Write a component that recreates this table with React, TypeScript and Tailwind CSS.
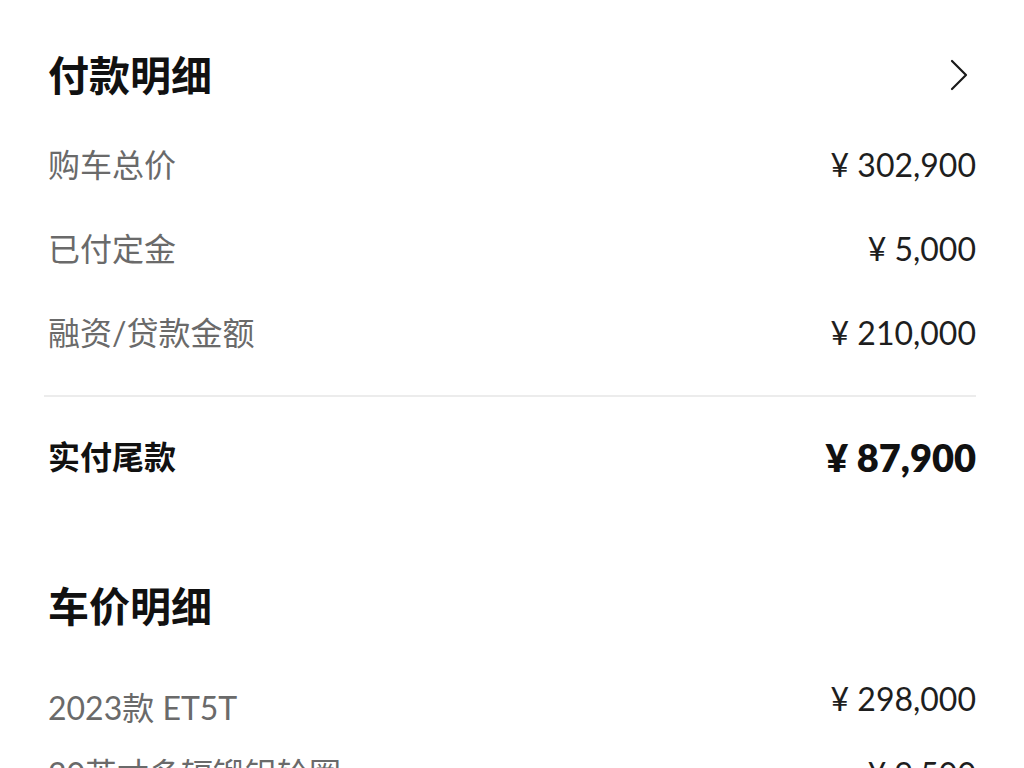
const font = "font-['Lato','Noto_Sans_CJK_SC',sans-serif]"

function Row({ label, value, className = 'h-[84px]' }: { label: string; value: string; className?: string }) {
  return (
    <div className={`flex items-center justify-between ${className}`}>
      <span className="text-[32px] leading-none text-[#6a6a6a]">{label}</span>
      <span className="text-[32px] leading-none text-[#1e1e1e]">{value}</span>
    </div>
  )
}

export default function App() {
  return (
    <div className={`h-[768px] w-[1024px] overflow-hidden bg-white px-12 pt-[47px] ${font}`}>
      <div className="flex h-[56px] items-center justify-between">
        <h2 className="text-[41px] font-bold leading-none text-[#111]">付款明细</h2>
        <svg width="22" height="32" viewBox="0 0 22 32" fill="none" className="mr-[6px]">
          <path d="M4 2 L18 16 L4 30" stroke="#1a1a1a" strokeWidth="2.2" strokeLinecap="round" strokeLinejoin="round" />
        </svg>
      </div>

      <div className="mt-[20px]">
        <Row label="购车总价" value="¥ 302,900" />
        <Row label="已付定金" value="¥ 5,000" />
        <Row label="融资/贷款金额" value="¥ 210,000" />
      </div>

      <div className="mt-[20px] -ml-1 h-[2px] bg-[#ececec]" />

      <div className="flex h-[120px] items-center justify-between">
        <span className="text-[32px] font-bold leading-none text-[#111]">实付尾款</span>
        <span className="text-[38px] font-extrabold leading-none text-[#111]">¥ 87,900</span>
      </div>

      <div className="mt-[61px] flex h-[56px] items-center">
        <h2 className="text-[41px] font-bold leading-none text-[#111]">车价明细</h2>
      </div>

      <div className="mt-[35px]">
        <div className="flex h-[70px] justify-between">
          <span className="mt-[23px] text-[32px] leading-none text-[#6a6a6a]">2023款 ET5T</span>
          <span className="mt-[14px] text-[32px] leading-none text-[#1e1e1e]">¥ 298,000</span>
        </div>
        <Row label="20英寸多辐锻铝轮圈" value="¥ 9,500" className="h-[70px]" />
      </div>
    </div>
  )
}
